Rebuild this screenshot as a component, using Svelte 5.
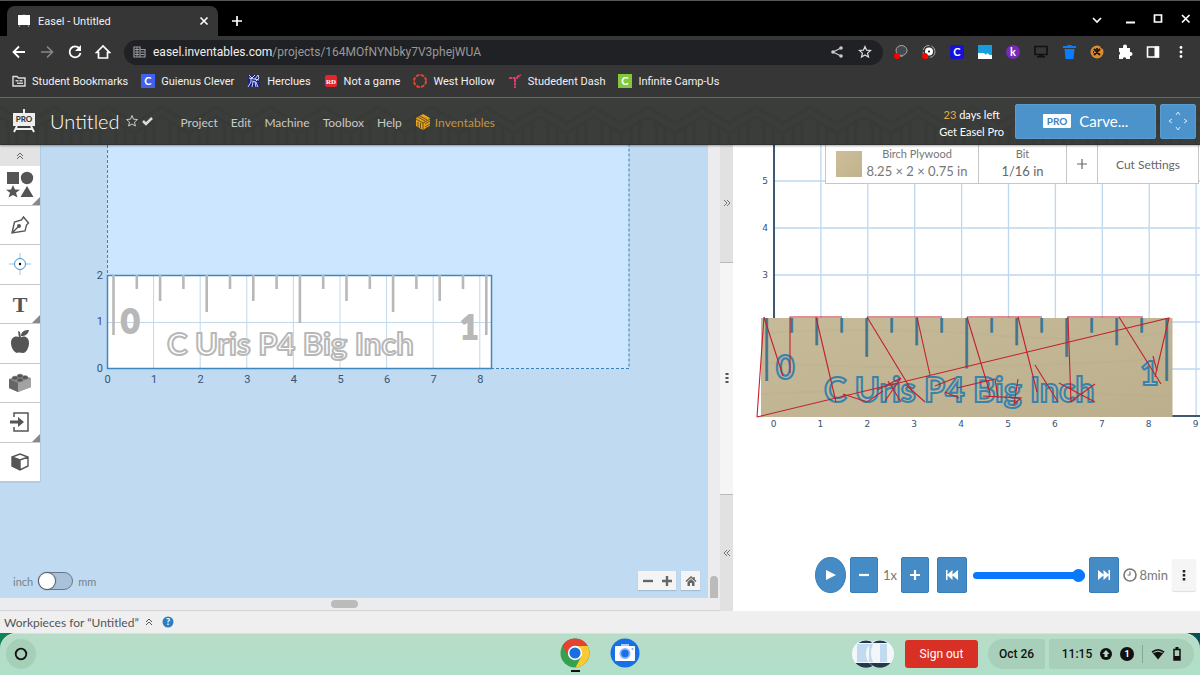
<script>
  const bookmarks = [
    { label: "Student Bookmarks", icon: "folder" },
    { label: "Guienus Clever", icon: "clever" },
    { label: "Herclues", icon: "hercules" },
    { label: "Not a game", icon: "rd" },
    { label: "West Hollow", icon: "ring" },
    { label: "Studedent Dash", icon: "dash" },
    { label: "Infinite Camp-Us", icon: "campus" },
  ];
  const extensions = ["lasso", "target", "clever", "window", "kami", "screen", "trash", "cookie", "puzzle", "panel", "more"];
  const menus = ["Project", "Edit", "Machine", "Toolbox", "Help"];
  const tools = [
    { name: "Shapes", icon: "shapes", more: true },
    { name: "Pen", icon: "pen" },
    { name: "Drill", icon: "drill" },
    { name: "Text", icon: "text", more: true },
    { name: "Icons", icon: "apple" },
    { name: "Apps", icon: "brick" },
    { name: "Import", icon: "import", more: true },
    { name: "3D", icon: "box" },
  ];

  // ruler marks, every half inch of the scaled design
  const marks = [60, 14, 26, 14, 37, 14, 26, 14, 48, 14, 26, 14, 37, 14, 26, 14, 60];
  const inch = 46.6;
  const previewInch = 46.9;
  const range = (n) => Array.from({ length: n }, (_, i) => i);

  // rapid moves between cuts
  const moves = [
    "M24 272L31 172L50 231", "M24 272L436 173L422 232", "M57 228V172H109", "M83 172L103 257",
    "M134 172H209M134 172L179 246", "M184 172L197 230", "M234 172H309M234 172L257 248",
    "M285 172L304 247", "M334 172H410M335 172L338 257", "M386 172L428 239",
    "M110 249L134 257L150 246", "M144 245L168 233L152 256M155 236L168 257M173 240L192 257",
    "M202 241L222 233M212 247L226 253M224 243L262 234L265 253",
    "M250 251L288 253L281 259L285 234", "M302 220L325 257M337 257L362 239",
    "M326 238L362 257", "M424 226L420 211",
  ];

  let metric = false;
  let progress = 100;
</script>

<div class="screen">
  <header class="browser">
    <div class="tabstrip">
      <div class="tab">
        <svg width="14" height="14"><path d="M1 1h12v10H1z" fill="#fff" /><path d="M3 11l-1 2M11 11l1 2M7 0v1" stroke="#999" /></svg>
        <span>Easel - Untitled</span>
        <button class="plain close" aria-label="Close tab"><svg width="10" height="10"><path d="M1.500 1.500l7 7M8.500 1.500l-7 7" stroke="#fff" stroke-width="1.600" /></svg></button>
      </div>
      <button class="plain newtab" aria-label="New tab"><svg width="12" height="12"><path d="M6 1v10M1 6h10" stroke="#fff" stroke-width="1.700" /></svg></button>
      <div class="window-buttons">
        <button class="plain" aria-label="Search tabs"><svg width="12" height="12"><path d="M2 5l4 4 4-4" fill="none" stroke="#fff" stroke-width="1.600" /></svg></button>
        <button class="plain" aria-label="Minimize"><svg width="12" height="12"><path d="M2 9.500h9" stroke="#fff" stroke-width="2" /></svg></button>
        <button class="plain" aria-label="Maximize"><svg width="12" height="12"><path d="M2.500 2h7v7h-7z" fill="none" stroke="#fff" stroke-width="1.700" /></svg></button>
        <button class="plain" aria-label="Close"><svg width="12" height="12"><path d="M2 2l7.500 7.500M9.500 2L2 9.500" stroke="#fff" stroke-width="1.700" /></svg></button>
      </div>
    </div>

    <div class="toolbar">
      <button class="plain" aria-label="Back"><svg width="16" height="16"><path d="M14 8H3M8 2.500L2.500 8 8 13.500" fill="none" stroke="#fff" stroke-width="1.800" /></svg></button>
      <button class="plain" aria-label="Forward"><svg width="16" height="16"><path d="M2 8h11M8 2.500L13.500 8 8 13.500" fill="none" stroke="#888" stroke-width="1.600" /></svg></button>
      <button class="plain" aria-label="Reload"><svg width="16" height="16"><path d="M12.500 4.500A5.500 5.500 0 1 0 13.500 9" fill="none" stroke="#fff" stroke-width="1.800" /><path d="M14 1v6H8z" fill="#fff" /></svg></button>
      <button class="plain" aria-label="Home"><svg width="16" height="16"><path d="M1.500 8.500L8 2l6.500 6.500H12.500V14h-9V8.500z" fill="none" stroke="#fff" stroke-width="1.700" /></svg></button>
      <div class="omnibox">
        <svg width="13" height="12"><path d="M1 1h6v10H1zM7 3.500h5V11H7" fill="none" stroke="#999" stroke-width="1.200" /><path d="M2 3.500h4M2 6h4M2 8.500h4M8 6h3M8 8.500h3M4 1v10" stroke="#999" /></svg>
        <span class="url">easel.inventables.com<i>/projects/164MOfNYNbky7V3phejWUA</i></span>
        <button class="plain" aria-label="Share"><svg width="14" height="14"><path d="M11 3L3 7l8 4" fill="none" stroke="#ccc" stroke-width="1.200" /><circle cx="11" cy="3" r="1.800" fill="#ccc" /><circle cx="3" cy="7" r="1.800" fill="#ccc" /><circle cx="11" cy="11" r="1.800" fill="#ccc" /></svg></button>
        <button class="plain" aria-label="Bookmark"><svg width="14" height="14"><path d="M7 1.500l1.600 3.700 4 .3-3 2.600.9 3.900L7 9.900 3.500 12l.9-3.900-3-2.600 4-.3z" fill="none" stroke="#ddd" stroke-width="1.200" /></svg></button>
      </div>
      {#each extensions as ext}
        <button class="plain" aria-label={ext}>
          <svg width="16" height="16">
            {#if ext === "lasso"}
              <ellipse cx="8.500" cy="6.500" rx="5.500" ry="5" fill="#444850" stroke="#aaa" /><path d="M10 12q-2 1-3 0" fill="none" stroke="#999" /><circle cx="4" cy="12" r="3" fill="#f00" />
            {:else if ext === "target"}
              <circle cx="8" cy="7.500" r="6" fill="none" stroke="#aaa" stroke-dasharray="8 2" /><circle cx="8" cy="7.500" r="4" fill="#fff" /><circle cx="8" cy="7.500" r="1" /><circle cx="4" cy="12" r="3" fill="#f00" />
            {:else if ext === "clever"}
              <rect x="1" y="1" width="14" height="14" rx="3" fill="#1610dc" /><text x="8" y="12" class="glyph" text-anchor="middle">C</text>
            {:else if ext === "window"}
              <path d="M1 1h14v14H1z" fill="#fff" /><path d="M1 1h14v10h-2l-3-2-1 2-2-2H1z" fill="#159ddd" />
            {:else if ext === "kami"}
              <circle cx="8" cy="8" r="7" fill="#7929b7" /><text x="8" y="12" class="glyph" text-anchor="middle">k</text>
            {:else if ext === "screen"}
              <path d="M2 2.500h12v8H2z" fill="none" stroke="#111" stroke-width="1.600" /><path d="M6 10h4v2h2v1.500H4V12h2z" fill="#111" />
            {:else if ext === "trash"}
              <path d="M2 2h4l1-1h3l1 1h4v2H2zM3.500 5h10l-1 10h-8z" fill="#087dff" />
            {:else if ext === "cookie"}
              <circle cx="8" cy="8" r="6.500" fill="#d98b35" /><path d="M5 5l6 6M11 5l-6 6M8 4v2M4 8h1" stroke="#23170b" stroke-width="1.800" /><circle cx="13" cy="3" r="1.500" fill="#353535" />
            {:else if ext === "puzzle"}
              <path d="M2 4h4V2.500a2 2 0 0 1 4 0V4h3v4h.5a2 2 0 0 1 0 4H13v3H9v-1a1.800 1.800 0 0 0-3 0v1H2v-4a2 2 0 0 0 0-3.500z" fill="#fff" />
            {:else if ext === "panel"}
              <path d="M2.500 3h11v10h-11z" fill="#383838" stroke="#fff" stroke-width="1.600" /><path d="M9.500 2.500H14v11H9.500z" fill="#fff" />
            {:else}
              <circle cx="8" cy="3.500" r="1.400" fill="#fff" /><circle cx="8" cy="8" r="1.400" fill="#fff" /><circle cx="8" cy="12.500" r="1.400" fill="#fff" />
            {/if}
          </svg>
        </button>
      {/each}
    </div>

    <nav class="bookmarks" aria-label="Bookmarks">
      {#each bookmarks as { label, icon }}
        <a href="#{icon}">
          <svg width="14" height="14">
            {#if icon === "folder"}
              <path d="M1 2.500h4l1.500 1.500H13v8H1z" fill="none" stroke="#ddd" stroke-width="1.400" /><path d="M3.500 6h3v1.500h-3zM7.500 6h3v1.500h-3zM5 8.500h6v1.500H5z" fill="#ccc" />
            {:else if icon === "clever"}
              <path d="M0 0h14v14H0z" fill="#4160ee" /><text x="7" y="11" class="glyph" text-anchor="middle">C</text>
            {:else if icon === "hercules"}
              <path d="M1 1h12v12H1z" fill="#1b247e" /><path d="M2 1l3 3 3-3M8 5l3-4 1 3-3 3M4 4v4l-3 5M5 7l4 1 2 5M6 8l-1 5M8 8l1 5M2 4l10 2" fill="none" stroke="#cdd6f5" />
            {:else if icon === "rd"}
              <rect x="1" y="1" width="12" height="12" rx="2" fill="#e4252c" /><text x="7" y="10" class="rd" text-anchor="middle">RD</text>
            {:else if icon === "ring"}
              <circle cx="7" cy="7" r="6" fill="none" stroke="#e0452f" stroke-width="2" stroke-dasharray="3.500 1.200" />
            {:else if icon === "dash"}
              <path d="M1 4h9M7 5v9M9 3l4-2" fill="none" stroke="#e33c66" stroke-width="2" stroke-dasharray="3 .6" />
            {:else}
              <path d="M0 0h14v14H0z" fill="#83c83c" /><text x="7" y="11" class="glyph" text-anchor="middle">C</text>
            {/if}
          </svg>
          {label}
        </a>
      {/each}
    </nav>
  </header>

  <header class="app-header">
    <svg class="texture" aria-hidden="true">
      <defs>
        <pattern id="weave" width="54" height="96" patternUnits="userSpaceOnUse">
          <path d="M8 24v30M17 30v30M37 30v30M46 24v30M0 19l27 16 27-16M0 9l27 16L54 9M27 35v28M0 58l17 10M54 58l-17 10M0 68l17 10" fill="none" stroke="#323432" stroke-width="3" />
        </pattern>
      </defs>
      <rect width="100%" height="100%" fill="url(#weave)" />
    </svg>
    <svg width="24" height="24"><path d="M1 4h22v13H1z" fill="#eee" /><path d="M12 0v4M5 17l-3 6M19 17l3 6M4 20h16" fill="none" stroke="#eee" stroke-width="2" /><text x="12" y="13" text-anchor="middle" class="pro-logo">PRO</text></svg>
    <h1>Untitled</h1>
    <svg width="28" height="14"><path d="M7 1.500l1.500 3.700 4 .3-3 2.600.9 3.900L7 10l-3.400 2 .9-3.900-3-2.600 4-.3z" fill="none" stroke="#ccc" /><path d="M18 7l3 3 6-6" fill="none" stroke="#ddd" stroke-width="2.500" /></svg>
    <nav class="menus">
      {#each menus as menu}
        <button class="plain">{menu}</button>
      {/each}
      <a href="#inventables">
        <svg width="16" height="16"><path d="M8 0l7 4v8l-7 4-7-4V4z" fill="#e6a11f" /><path d="M1 5l7 4 7-4M8 9v7M3 3l7 4M5 2l7 4M3 8v5M5.500 9v5M10 10l5-3M10 13l5-3M10 15l5-3" fill="none" stroke="#4d3c1a" stroke-width=".8" /></svg>
        Inventables
      </a>
    </nav>
    <p class="trial"><b>23</b> days left<br />Get Easel Pro</p>
    <button class="carve"><span>PRO</span>Carve...</button>
    <button class="jog" aria-label="Jog machine"><svg width="20" height="20"><path d="M8 4l2-3 2 3M8 16l2 3 2-3M4 8l-3 2 3 2M16 8l3 2-3 2" fill="none" stroke="#d8e9f6" /></svg></button>
  </header>

  <main>
    <section class="design">
      <div class="canvas">
        <svg class="drawing" role="img" aria-label="Design canvas">
          <path d="M107 0h522v224H107z" fill="#cce6ff" />
          <path d="M107.500 0v130M491 223.500h138V0" fill="none" stroke="#3c7fb9" stroke-dasharray="3 2" />
          <path d="M107 131h384v93H107z" fill="#fff" />
          {#each range(8) as i}
            <path d="M{107 + inch * (i + 1)} 131v93" stroke="#c3d8e8" />
          {/each}
          <path d="M107 177.500h384" stroke="#c3d8e8" />
          <path d="M107.500 130.500h384v93h-384z" fill="none" stroke="#3f87c0" stroke-width="1.500" />
          {#each marks as length, i}
            <path d="M{113.500 + 23.300 * i} 130v{length}" stroke="#b8b8b8" stroke-width="2.600" />
          {/each}
          <g class="lettering">
            <text x="121" y="188">0</text>
            <text x="460" y="194">1</text>
            <text x="167" y="210" class="outline">C Uris P4 Big Inch</text>
          </g>
          <g class="axis">
            {#each range(9) as i}
              <text x={107.500 + inch * i} y="238" text-anchor="middle">{i}</text>
            {/each}
            {#each range(3) as i}
              <text x="103" y={227 - inch * i} text-anchor="end">{i}</text>
            {/each}
          </g>
        </svg>

        <div class="tools">
          <button class="collapse" aria-label="Collapse tools"><svg width="8" height="8"><path d="M1 4l3-3 3 3M1 7l3-3 3 3" fill="none" stroke="#666" /></svg></button>
          {#each tools as { name, icon, more }}
            <button class="tool" class:more aria-label={name}>
              <svg width="28" height="28">
                {#if icon === "shapes"}
                  <path d="M1 1h12v12H1zM7 14l2 4.500 5 .3-4 3 1.500 4.700L7 24l-4.500 2.500L4 21.800 0 18.800l5-.3zM21 15l6.500 11h-13z" fill="#555" /><circle cx="21" cy="7" r="6.200" fill="#555" />
                {:else if icon === "pen"}
                  <path d="M6 22L8.500 11l7-2 2-3 5 6-2 2-1.500 6z M6 22l6-6" fill="none" stroke="#555" stroke-width="1.400" /><circle cx="13" cy="15" r="2" fill="#555" />
                {:else if icon === "drill"}
                  <circle cx="14" cy="14" r="5.500" fill="none" stroke="#3b93d6" /><circle cx="14" cy="14" r="1.200" /><path d="M14 3v5M14 20v5M3 14h5M20 14h5" stroke="#9cc6e6" />
                {:else if icon === "text"}
                  <text x="14" y="22" text-anchor="middle" class="letter">T</text>
                {:else if icon === "apple"}
                  <path d="M14 9c4-3 9-1 9 5 0 5-3 10-6 10-2 0-4-1-6 0-3-1-6-5-6-10 0-6 5-8 9-5zM15 6c1-4 4-5 8-5-1 4-3 6-8 6zM12 2l2 1 1 6h-2z" fill="#555" />
                {:else if icon === "brick"}
                  <path d="M3 10l11-4 11 3v9l-13 5-9-4z" fill="#888" /><path d="M12 14l13-5v9l-13 5z" fill="#a2a2a2" /><path d="M3 10l9 4v9l-9-4z" fill="#666" /><g fill="#555" stroke="#999" stroke-width=".5"><ellipse cx="9" cy="9" rx="3" ry="2" /><ellipse cx="14" cy="11" rx="3" ry="2" /><ellipse cx="14" cy="7" rx="3" ry="2" /><ellipse cx="19" cy="8.500" rx="3" ry="2" /></g>
                {:else if icon === "import"}
                  <path d="M8 9V5h14v18H8v-4" fill="none" stroke="#555" stroke-width="1.500" /><path d="M4 12.500h8V9l6 5-6 5v-3.500H4z" fill="#555" />
                {:else}
                  <path d="M6 9l8-3 8 3v9l-8 4-8-4zM6 9l8 3 8-3M14 12v10" fill="none" stroke="#555" stroke-width="1.400" /><path d="M6 9l8 3v10l-8-4z" fill="#555" />
                {/if}
              </svg>
            </button>
          {/each}
        </div>

        <label class="units">
          inch
          <input type="checkbox" bind:checked={metric} />
          mm
        </label>

        <div class="zoom">
          <div>
            <button aria-label="Zoom out"><svg width="10" height="10"><path d="M0 5h10" stroke="#666" stroke-width="2.400" /></svg></button>
            <button aria-label="Zoom in"><svg width="10" height="10"><path d="M0 5h10M5 0v10" stroke="#666" stroke-width="2.400" /></svg></button>
          </div>
          <div>
            <button aria-label="Reset view"><svg width="12" height="10"><path d="M1 5.500L6 1l5 4.500M9 1v3" fill="none" stroke="#666" stroke-width="1.500" /><path d="M2.500 6L6 3l3.500 3v4H7V7H5v3H2.500z" fill="#666" /></svg></button>
          </div>
        </div>
      </div>
      <div class="scroll-y"><span></span></div>
      <div class="scroll-x"><span></span></div>
    </section>

    <div class="splitter">
      <button aria-label="Expand design"><svg width="8" height="8"><path d="M1 1l3 3-3 3M4 1l3 3-3 3" fill="none" stroke="#777" /></svg></button>
      <div class="grip"><svg width="4" height="12"><path d="M.5 1h3v2h-3zM.5 5h3v2h-3zM.5 9h3v2h-3z" fill="#555" /></svg></div>
      <button aria-label="Expand preview"><svg width="8" height="8"><path d="M4 1L1 4l3 3M7 1L4 4l3 3" fill="none" stroke="#777" /></svg></button>
    </div>

    <section class="preview">
      <svg class="drawing" role="img" aria-label="Cut preview">
        <defs>
          <linearGradient id="birch" x2="1" y2="1">
            <stop stop-color="#c7ba99" /><stop offset=".5" stop-color="#c1b594" /><stop offset="1" stop-color="#bcaf8d" />
          </linearGradient>
        </defs>
        {#each range(9) as i}
          <path d="M{41 + previewInch * (i + 1)} 0v271" stroke="#bdd7ef" stroke-width="1.300" />
        {/each}
        {#each range(5) as i}
          <path d="M41 {36 + 47 * i}h426" stroke="#bdd7ef" stroke-width="1.300" />
        {/each}
        <path d="M41 0v271h426" fill="none" stroke="#3d5870" stroke-width="2" />
        <path d="M28 173h411.500v99H28z" fill="url(#birch)" />
        <path d="M28 188q120-7 230 2t181-4M28 218q190 10 411-5M28 249q160-9 411 3" fill="none" stroke="#b6a986" stroke-width="2" opacity=".2" />
        {#each marks as length, i}
          <path d="M{34 + 25 * i} 173v{length * 1.050}" stroke="#387fa9" stroke-width="2.400" />
          <path d="M{33 + 25 * i} 173v{length * 1.050}" stroke="#52686d" stroke-width="1" />
        {/each}
        <g class="carving">
          <text x="43" y="234" class="digit">0</text>
          <text x="407" y="240" class="digit">1</text>
          <text x="91" y="257">C Uris P4 Big Inch</text>
        </g>
        {#each moves as d}
          <path {d} fill="none" stroke="#c41f2c" stroke-width="1.100" />
        {/each}
        <g class="axis small">
          {#each range(10) as i}
            <text x={40.500 + previewInch * i} y="282" text-anchor="middle">{i}</text>
          {/each}
          {#each range(3) as i}
            <text x="35" y={133 - 47 * i} text-anchor="end">{i + 3}</text>
          {/each}
        </g>
      </svg>

      <div class="settings">
        <button class="material">
          <i class="swatch"></i>
          <span><small>Birch Plywood</small>8.25 × 2 × 0.75 in</span>
        </button>
        <button class="bit"><small>Bit</small>1/16 in</button>
        <button class="add" aria-label="Add bit"><svg width="12" height="12"><path d="M6 1v10M1 6h10" stroke="#666" stroke-width="1.200" /></svg></button>
        <button class="cut">Cut Settings</button>
      </div>

      <div class="player">
        <button class="play" aria-label="Play"><svg width="12" height="12"><path d="M1 1l10 5-10 5z" fill="#fff" /></svg></button>
        <button aria-label="Slower"><svg width="10" height="10"><path d="M0 5h10" stroke="#fff" stroke-width="2.200" /></svg></button>
        <span class="speed">1x</span>
        <button aria-label="Faster"><svg width="10" height="10"><path d="M0 5h10M5 0v10" stroke="#fff" stroke-width="2.200" /></svg></button>
        <button class="skip" aria-label="To start"><svg width="14" height="12"><path d="M1 1h1.500v4.500L7.500 1v4.500L13 1v10L7.500 6.500V11l-5-4.500V11H1z" fill="#fff" /></svg></button>
        <input type="range" min="0" max="100" bind:value={progress} aria-label="Simulation progress" />
        <button class="next" aria-label="To end"><svg width="14" height="12"><path d="M13 1h-1.500v4.500L6.500 1v4.500L1 1v10l5.500-4.500V11l5-4.500V11H13z" fill="#fff" /></svg></button>
        <span class="time"><svg width="14" height="14"><circle cx="7" cy="7" r="6" fill="none" stroke="#777" stroke-width="1.600" /><path d="M7 3.500V7H4.500" fill="none" stroke="#777" stroke-width="1.200" /></svg>8min</span>
        <button class="options" aria-label="Simulation options"><svg width="4" height="12"><path d="M.7 1h2.600v2.400H.7zM.7 5h2.600v2.400H.7zM.7 9h2.600v2.400H.7z" fill="#222" /></svg></button>
      </div>
    </section>
  </main>

  <div class="workpieces">
    Workpieces for “Untitled”
    <svg width="8" height="8"><path d="M1 4l3-3 3 3M1 7l3-3 3 3" fill="none" stroke="#555" /></svg>
    <button class="plain" aria-label="Help"><svg width="12" height="12"><circle cx="6" cy="6" r="5.500" fill="#2d7fc1" /><text x="6" y="9" text-anchor="middle" class="question">?</text></svg></button>
  </div>

  <footer class="shelf-back">
    <div class="shelf">
      <button class="launcher" aria-label="Launcher"><svg width="14" height="14"><circle cx="7" cy="7" r="5.300" fill="none" stroke="#111" stroke-width="1.800" /></svg></button>
      <div class="apps">
        <button class="plain" aria-label="Chrome">
          <svg width="30" height="36">
            <circle cx="15" cy="17" r="14.500" fill="#34a050" /><path d="M15 17L2.400 9.800A14.500 14.500 0 0 1 27.600 9.800z" fill="#e54234" /><path d="M15 10h12.600A14.500 14.500 0 0 1 15.500 31.500L21.500 20z" fill="#fbc931" /><path d="M2.400 9.800L9 21l5-11z" fill="#e54234" /><circle cx="15" cy="17" r="7.200" fill="#fff" /><circle cx="15" cy="17" r="5.600" fill="#196fe1" /><path d="M11 35h9" stroke="#111" stroke-width="2" />
          </svg>
        </button>
        <button class="plain" aria-label="Camera">
          <svg width="30" height="36">
            <circle cx="15" cy="17" r="14.500" fill="#196fe5" /><path d="M11 8h8v4h-8z" fill="#a8caff" /><rect x="5" y="10" width="20" height="15" rx="1" fill="#fff" /><circle cx="15" cy="17.500" r="5.500" fill="#8bb6fa" /><circle cx="15" cy="17.500" r="3.700" fill="#196fe5" /><circle cx="22.500" cy="13" r="1" fill="#63b5ee" />
          </svg>
        </button>
      </div>
      <div class="status">
        <button class="plain" aria-label="Recent captures">
          <svg width="44" height="30">
            <circle cx="15" cy="15" r="14" fill="#f4f7fa" /><path d="M7.500 4a14 14 0 0 1 15 0zM4.500 24a14 14 0 0 0 21 0z" fill="#22394d" /><path d="M6 5h15v18H6z" fill="#c2daf1" /><circle cx="29" cy="15" r="14" fill="#f4f7fa" /><path d="M21.500 4a14 14 0 0 1 15 0zM18.500 24a14 14 0 0 0 21 0z" fill="#22394d" /><path d="M29 5h7v18h-7zM18 5h4q-4 9 0 18h-4z" fill="#c2daf1" />
          </svg>
        </button>
        <button class="signout">Sign out</button>
        <div class="tray">
          <button class="date">Oct 26</button>
          <button class="clock">
            11:15
            <svg width="12" height="12"><circle cx="6" cy="6" r="6" fill="#111" /><path d="M6 2l3.500 4H7.500v3h-3V6h-2z" fill="#b4dac5" /></svg>
            <svg width="14" height="14"><circle cx="7" cy="7" r="7" fill="#111" /><text x="7" y="10" text-anchor="middle" class="count">1</text></svg>
            <span class="rule"></span>
            <svg width="14" height="12"><path d="M7 11.500L.5 3.500q6.500-5 13 0z" fill="#111" /><path d="M2.500 4.500q4.500-3 9 0" fill="none" stroke="#b4dac5" /></svg>
            <svg width="8" height="14"><path d="M1 2.500h6V13H1z" fill="none" stroke="#111" stroke-width="1.500" /><path d="M2.500 0h3v2h-3zM1 9h6v4H1z" fill="#111" /></svg>
          </button>
        </div>
      </div>
    </div>
  </footer>
</div>

<style>
  :global(body) {
    margin: 0;
  }

  .screen {
    display: flex;
    flex-direction: column;
    min-height: 100vh;
    font-family: Lato, "Liberation Sans", sans-serif;
    font-size: 13px;
    color: #555;
    background: #fff;
  }

  svg {
    display: block;
    flex: none;
  }

  button {
    display: flex;
    align-items: center;
    justify-content: center;
    margin: 0;
    padding: 0;
    border: 0;
    font: inherit;
    color: inherit;
    cursor: pointer;
  }

  a {
    color: inherit;
    text-decoration: none;
  }

  .plain {
    background: none;
  }

  .glyph {
    font: bold 11px Lato, sans-serif;
    fill: #fff;
  }

  .rd {
    font: bold 7px "Liberation Serif", serif;
    fill: #fff;
  }

  /* browser chrome */
  .browser {
    font-family: Roboto, sans-serif;
    font-size: 11px;
    color: #f1f1f1;
    background: #363636;
    border-bottom: 1px solid #6b6c6a;
  }

  .tabstrip {
    display: flex;
    align-items: center;
    height: 35px;
    padding-left: 7px;
    background: #000;
    border-top: 1px solid #555;
  }

  .tab {
    display: flex;
    align-items: center;
    align-self: flex-end;
    gap: 7px;
    box-sizing: border-box;
    width: 211px;
    height: 30px;
    padding: 0 9px 0 10px;
    background: #363636;
    border-radius: 8px 8px 0 0;
  }

  .close {
    margin-left: auto;
  }

  .newtab {
    width: 38px;
    height: 30px;
    margin-top: 5px;
  }

  .window-buttons {
    display: flex;
    margin-left: auto;
  }

  .window-buttons button {
    width: 28px;
    height: 28px;
  }

  .window-buttons button:first-child {
    margin-right: 5px;
  }

  .toolbar {
    display: flex;
    align-items: center;
    height: 32px;
    padding: 0 5px;
  }

  .toolbar .plain {
    flex: none;
    width: 28px;
    height: 25px;
  }

  .omnibox {
    display: flex;
    flex: 1;
    align-items: center;
    gap: 7px;
    min-width: 0;
    height: 25px;
    margin: 0 4px 0 7px;
    padding: 0 4px 0 9px;
    background: #202124;
    border-radius: 13px;
  }

  .omnibox .plain {
    margin-left: -7px;
  }

  .url {
    flex: 1;
    overflow: hidden;
    font-size: 12px;
    white-space: nowrap;
  }

  .url i {
    font-style: normal;
    color: #999;
  }

  .bookmarks {
    display: flex;
    gap: 13px;
    height: 29px;
    padding-left: 12px;
    white-space: nowrap;
  }

  .bookmarks a {
    display: flex;
    align-items: center;
    gap: 6px;
    height: 26px;
  }

  /* app header */
  .app-header {
    position: relative;
    z-index: 1;
    display: flex;
    align-items: center;
    box-sizing: border-box;
    height: 47px;
    padding: 0 4px 0 12px;
    color: #fff;
    background: #3b3d3a;
    border-bottom: 1px solid #303230;
    box-shadow: 0 1px 2px #0005;
  }

  .texture {
    position: absolute;
    inset: 0;
    z-index: -1;
    width: 100%;
    height: 100%;
    opacity: 0.3;
  }

  .pro-logo {
    font: 900 8px Lato, sans-serif;
    fill: #3b3d3a;
  }

  h1 {
    margin: 0 5px 0 14px;
    font-size: 20px;
    font-weight: 300;
  }

  .menus {
    display: flex;
    gap: 13px;
    margin-left: 28px;
    padding-top: 2px;
    font-size: 12px;
    color: #c9c9c7;
  }

  .menus a {
    display: flex;
    align-items: center;
    gap: 4px;
    color: #c39445;
  }

  .trial {
    margin: 0 11px 0 auto;
    padding-top: 4px;
    font-size: 11px;
    line-height: 17px;
    text-align: center;
  }

  .trial b {
    font-weight: 400;
    color: #e5a94f;
  }

  .carve,
  .jog {
    height: 35px;
    background: #4c92cb;
    border: 1px solid #5b9dd1;
    border-radius: 2px;
  }

  .carve {
    gap: 8px;
    width: 141px;
    margin-right: 4px;
    font-size: 15px;
  }

  .carve span {
    padding: 0 4px;
    font-size: 10px;
    font-weight: 700;
    line-height: 14px;
    color: #3c82bb;
    background: #fff;
    border-radius: 1px;
  }

  .jog {
    width: 36px;
  }

  /* workspace */
  main {
    display: grid;
    flex: 1;
    grid-template-columns: 54fr 13px 35fr;
    min-height: 464px;
  }

  .design {
    display: grid;
    grid-template-rows: 1fr 12px;
    grid-template-columns: 1fr 12px;
    background: #ececef;
    border-bottom: 1px solid #d4d4d8;
  }

  .canvas,
  .preview {
    position: relative;
    overflow: hidden;
  }

  .canvas {
    background: #c0daf1;
  }

  .drawing {
    position: absolute;
    inset: 0;
    width: 100%;
    height: 100%;
  }

  .lettering {
    font: bold 32px Lato, sans-serif;
    fill: #b8b8b8;
    stroke: #b8b8b8;
    stroke-width: 2px;
    stroke-linejoin: round;
  }

  .lettering .outline {
    font-size: 31px;
    fill: #fff;
  }

  .carving {
    font: bold 34px Lato, sans-serif;
    fill: #c1b594;
    stroke: #3982ac;
    stroke-width: 2px;
  }

  .carving .digit {
    font-size: 32px;
  }

  .axis {
    font: 11px Roboto, sans-serif;
    fill: #355275;
  }

  .small {
    font: 9px "DejaVu Sans", sans-serif;
  }

  .tools {
    position: absolute;
    top: 0;
    left: 0;
    display: flex;
    flex-direction: column;
    width: 40px;
    height: 337px;
    background: #fff;
    box-shadow: 0 0 1px #0006;
  }

  .collapse {
    height: 21px;
    background: #e3e3e3;
  }

  .tool {
    position: relative;
    flex: 1;
    background: #fff;
    border-bottom: 1px solid #c8c8c8;
  }

  .more::after {
    position: absolute;
    right: 0;
    bottom: 0;
    border: 4px solid #888;
    border-top-color: transparent;
    border-left-color: transparent;
    content: "";
  }

  .letter {
    font: bold 22px "Liberation Serif", serif;
    fill: #555;
  }

  .units {
    position: absolute;
    bottom: 8px;
    left: 13px;
    display: flex;
    align-items: center;
    gap: 5px;
    font-size: 11px;
    color: #77828d;
  }

  .units input {
    width: 35px;
    height: 18px;
    margin: 0;
    appearance: none;
    background: #a9c2da;
    border: 1px solid #66798c;
    border-radius: 9px;
  }

  .units input::before {
    display: block;
    width: 16px;
    height: 16px;
    background: #fff;
    border-radius: 8px;
    box-shadow: 0 0 1px 1px #556;
    content: "";
  }

  .units input:checked::before {
    margin-left: auto;
  }

  .zoom {
    position: absolute;
    right: 8px;
    bottom: 8px;
    display: flex;
    gap: 5px;
  }

  .zoom div {
    display: flex;
    background: #f4f4f4;
    box-shadow: 0 1px 1px #0002;
  }

  .zoom button {
    width: 19px;
    height: 19px;
    background: none;
  }

  .scroll-y {
    display: flex;
    align-items: flex-end;
    justify-content: center;
  }

  .scroll-y span {
    width: 8px;
    height: 22px;
    background: #bbb;
    border-radius: 4px 4px 0 0;
  }

  .scroll-x {
    display: flex;
    align-items: center;
    justify-content: center;
    padding-right: 20px;
  }

  .scroll-x span {
    width: 27px;
    height: 8px;
    background: #bbb;
    border-radius: 4px;
  }

  .splitter {
    display: grid;
    grid-template-rows: 1fr 2fr 1fr;
    background: #f5f5f5;
  }

  .splitter button {
    background: #e1e1e1;
  }

  .grip {
    display: flex;
    align-items: center;
    justify-content: center;
    border: 1px solid #bbb;
    border-width: 1px 0;
  }

  .settings {
    position: absolute;
    top: 0;
    right: 1px;
    display: flex;
    height: 38px;
    color: #666;
    background: #fff;
    border: 1px solid #c6c6c6;
    border-top: 0;
  }

  .settings button {
    background: #fff;
    border-left: 1px solid #c6c6c6;
  }

  .settings small {
    display: block;
    font-size: 11px;
    line-height: 14px;
    color: #777;
  }

  .settings .material {
    gap: 4px;
    width: 152px;
    line-height: 20px;
    color: #777;
    border: 0;
  }

  .swatch {
    width: 26px;
    height: 26px;
    background: linear-gradient(135deg, #cdbf9b, #c0b28b);
  }

  .settings .bit {
    flex-direction: column;
    width: 88px;
    line-height: 20px;
  }

  .settings .add {
    width: 31px;
  }

  .settings .cut {
    width: 101px;
    font-size: 12px;
  }

  .player {
    position: absolute;
    right: 4px;
    bottom: 18px;
    display: flex;
    align-items: center;
    gap: 4px;
    color: #777;
  }

  .player button {
    width: 28px;
    height: 36px;
    background: #458bc5;
    border: 1px solid #397eb8;
    border-radius: 2px;
  }

  .player .play {
    width: 31px;
    border-radius: 50%;
  }

  .speed {
    width: 15px;
    text-align: center;
  }

  .player .skip {
    width: 30px;
    margin-left: 4px;
  }

  .player .next {
    width: 30px;
  }

  .player input {
    width: 112px;
    height: 12px;
    margin: 0 0 0 2px;
    appearance: none;
    background: none;
  }

  .player input::-webkit-slider-runnable-track {
    height: 7px;
    background: #0878ff;
    border-radius: 4px;
  }

  .player input::-webkit-slider-thumb {
    width: 13px;
    height: 13px;
    margin-top: -3px;
    appearance: none;
    background: #0878ff;
    border-radius: 50%;
  }

  .time {
    display: flex;
    align-items: center;
    gap: 2px;
  }

  .player .options {
    width: 24px;
    height: 32px;
    background: #f5f5f5;
    border: 0;
    box-shadow: 0 1px 1px #0002;
  }

  .workpieces {
    display: flex;
    align-items: center;
    gap: 6px;
    height: 22px;
    padding-left: 4px;
    font-size: 12px;
    background: #efefef;
  }

  .workpieces .plain {
    margin-left: 3px;
  }

  .question {
    font: 900 9px Lato, sans-serif;
    fill: #fff;
  }

  /* system shelf */
  .shelf-back {
    background: linear-gradient(90deg, #11835b, #075057);
  }

  .shelf {
    display: grid;
    grid-template-columns: 1fr auto 1fr;
    align-items: center;
    height: 42px;
    padding: 0 6px;
    font-family: Roboto, sans-serif;
    font-size: 12px;
    font-weight: 500;
    color: #111;
    background: linear-gradient(#b8dcc8, #b0dfc9);
    border-radius: 16px 16px 0 0;
    box-shadow: inset 0 1px #cde8d7;
  }

  .launcher {
    width: 30px;
    height: 30px;
    background: #a6cfb7;
    border-radius: 50%;
  }

  .apps {
    display: flex;
    gap: 20px;
  }

  .status {
    display: flex;
    gap: 10px;
    align-items: center;
    justify-content: flex-end;
  }

  .signout {
    width: 73px;
    height: 28px;
    font-weight: 400;
    color: #fff;
    background: #d93025;
    border-radius: 3px;
  }

  .tray {
    display: flex;
    gap: 4px;
  }

  .date,
  .clock {
    height: 30px;
    background: #a8cfba;
  }

  .date {
    width: 57px;
    border-radius: 15px 2px 2px 15px;
  }

  .clock {
    gap: 8px;
    width: 145px;
    border-radius: 2px 15px 15px 2px;
  }

  .rule {
    width: 1px;
    height: 18px;
    background: #86a696;
  }

  .count {
    font: bold 9px Roboto, sans-serif;
    fill: #fff;
  }
</style>
